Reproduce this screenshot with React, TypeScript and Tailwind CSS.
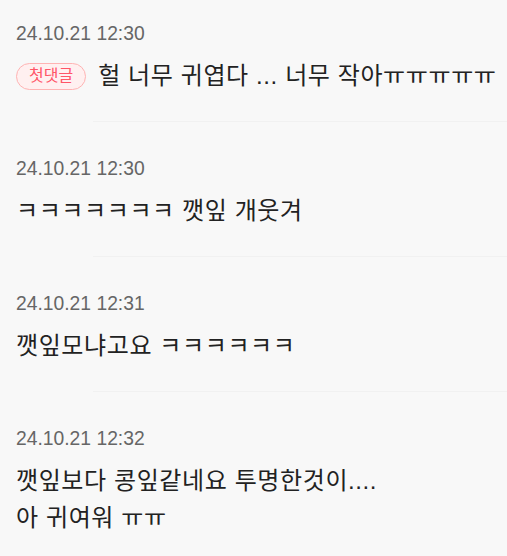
const COMMENTS = [
  { date: "24.10.21 12:30", text: "헐 너무 귀엽다 ... 너무 작아ㅠㅠㅠㅠㅠ", first: true },
  { date: "24.10.21 12:30", text: "ㅋㅋㅋㅋㅋㅋㅋ 깻잎 개웃겨" },
  { date: "24.10.21 12:31", text: "깻잎모냐고요 ㅋㅋㅋㅋㅋㅋ" },
  { date: "24.10.21 12:32", text: "깻잎보다 콩잎같네요 투명한것이....\n아 귀여워 ㅠㅠ" },
];

type CommentItem = {
  date: string;
  text: string;
  first?: boolean;
  top?: boolean;
};

const Comment = ({ date, text, first, top }: CommentItem) => {
  return (
    <li>
      <div className={`pl-4 pr-2 ${top ? "pt-[22px]" : "pt-[35px]"} pb-[27px]`}>
        <div className="text-[19.3px] leading-6 text-[#666]">{date}</div>
        <p className="mt-[11px] text-[24px] leading-[37px] tracking-[0.6px] text-[#222] whitespace-pre-line">
          {first && (
            <span className="mr-3 inline-flex h-[27px] items-center rounded-full border border-[#ffb3b3] bg-[#fff0f0] px-[12px] align-[3px] text-[16px] leading-none tracking-normal text-[#ff5567]">
              첫댓글
            </span>
          )}
          {text}
        </p>
      </div>
      <div className="ml-[93px] h-px bg-[#f1f1f1]" />
    </li>
  );
};

export default function App() {
  return (
    <div
      className="min-h-screen bg-[#f8f8f8]"
      style={{ fontFamily: '"Liberation Sans", "Noto Sans CJK KR", sans-serif' }}
    >
      <ul>
        {COMMENTS.map((c, i) => (
          <Comment key={i} date={c.date} text={c.text} first={c.first} top={i === 0} />
        ))}
      </ul>
    </div>
  );
}
